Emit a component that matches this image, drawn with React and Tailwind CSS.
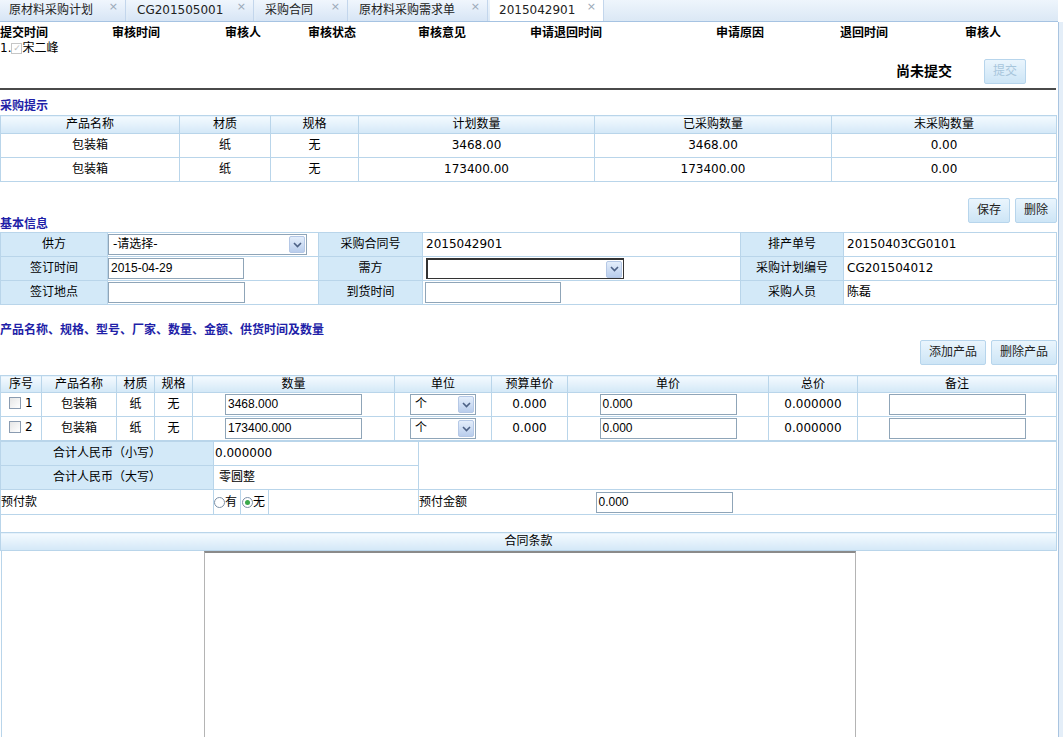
import React from "react";

const tabs = [
  { title: "原材料采购计划", w: "w-[126px]", active: false },
  { title: "CG201505001", w: "w-[126px]", active: false },
  { title: "采购合同", w: "w-[92px]", active: false },
  { title: "原材料采购需求单", w: "w-[138px]", active: false },
  { title: "2015042901", w: "w-[114px]", active: true },
];

const auditCols = ["提交时间", "审核时间", "审核人", "审核状态", "审核意见", "申请退回时间", "申请原因", "退回时间", "审核人"];

const hintRows = [
  { name: "包装箱", mat: "纸", spec: "无", plan: "3468.00", done: "3468.00", left: "0.00" },
  { name: "包装箱", mat: "纸", spec: "无", plan: "173400.00", done: "173400.00", left: "0.00" },
];

const products = [
  { no: 1, name: "包装箱", mat: "纸", spec: "无", qty: "3468.000" },
  { no: 2, name: "包装箱", mat: "纸", spec: "无", qty: "173400.000" },
];

const cell = "border border-[#b9d5ea]";
const head = "border border-[#b9d5ea] bg-linear-to-b from-[#f4faff] to-[#d3e8f7] font-normal text-center";
const label = "border border-[#b9d5ea] bg-[#d3e9f8] text-center";
const inputFont = "font-['Liberation_Sans','Noto_Sans_CJK_SC',sans-serif]";

function Btn({ children, disabled }) {
  return (
    <button
      className={
        "h-[25px] px-[8px] border border-[#b7d5ec] rounded-[2px] bg-linear-to-b from-[#eaf5fd] to-[#cde5f6] text-[12px] " +
        (disabled ? "text-[#a8c6dc]" : "text-[#222]")
      }
    >
      {children}
    </button>
  );
}

function TextBox({ value, w }) {
  return (
    <div className={"h-[21px] border border-[#8fa5b8] bg-white px-[2px] flex items-center text-[12px] " + inputFont + " " + w}>
      {value}
    </div>
  );
}

function Select({ value, w, dark }) {
  return (
    <div
      className={
        "h-[21px] border bg-white flex items-center justify-between pl-[4px] pr-[1px] text-[12px] " +
        (dark ? "border-[#333] border-t-2 border-l-2 " : "border-[#8fa5b8] ") +
        w
      }
    >
      <span>{value}</span>
      <span className="w-[16px] h-[17px] flex items-center justify-center bg-linear-to-b from-[#e4eefb] to-[#b9cdec] border border-[#b5c8e6] rounded-[2px]">
        <svg width="9" height="6" viewBox="0 0 9 6">
          <path d="M1 1 L4.5 4.5 L8 1" fill="none" stroke="#4d6185" strokeWidth="1.6" />
        </svg>
      </span>
    </div>
  );
}

function Radio({ checked }) {
  return (
    <span className="flex w-[11px] h-[11px] shrink-0 rounded-full border border-[#7b8fa6] bg-white items-center justify-center">
      {checked && <span className="w-[5px] h-[5px] rounded-full bg-[#3aa94a]" />}
    </span>
  );
}

function Check() {
  return <span className="inline-block w-[12px] h-[12px] border border-[#8a9bb0] bg-linear-to-br from-[#e6e6e6] to-white align-middle" />;
}

export default function App() {
  return (
    <div className="w-[1063px] h-[737px] overflow-hidden bg-white flex text-[12px] leading-[15px] text-black font-['DejaVu_Sans','Noto_Sans_CJK_SC',sans-serif]">
      <div className="w-[1058px] flex flex-col">
        {/* 标签栏 */}
        <div className="h-[22px] shrink-0 flex bg-linear-to-b from-[#eef5fc] to-[#dbe8f5] border-b border-[#a6c3e2]">
          {tabs.map((t) => (
            <div
              key={t.title}
              className={
                "relative h-[21px] mr-[2px] flex items-center pl-[9px] text-[12px] text-[#222] border-r border-[#c3d6ec] " +
                t.w +
                (t.active ? " bg-white" : " bg-linear-to-b from-[#f0f6fd] to-[#d7e5f5]")
              }
            >
              {t.title}
              <span className="absolute right-[7px] top-[-1px] text-[11px] text-[#9aa8b8]">×</span>
            </div>
          ))}
        </div>

        {/* 审核记录 */}
        <div className="grid grid-cols-[112px_113px_83px_110px_112px_186px_124px_125px_1fr] h-[19px] shrink-0 items-end font-bold">
          {auditCols.map((c, i) => (
            <div key={i}>{c}</div>
          ))}
        </div>
        <div className="h-[15px] shrink-0 flex items-center">
          1.
          <span className="inline-block w-[11px] h-[11px] border border-[#c6c6c6] text-[9px] leading-[9px] text-[#bbb] text-center">✓</span>
          宋二峰
        </div>
        <div className="h-[31px] shrink-0 flex items-center justify-end pr-[32px]">
          <span className="text-[14px] font-bold mr-[32px]">尚未提交</span>
          <Btn disabled>提交</Btn>
        </div>
        <div className="h-[2px] shrink-0 mt-[1px] bg-[#4a4a4a] mr-[2px]" />

        {/* 采购提示 */}
        <div className="h-[24px] shrink-0 flex items-end text-[#1f1fa8] font-bold">采购提示</div>
        <table className="w-[1057px] mt-[1px] table-fixed border-collapse text-center">
          <colgroup>
            <col className="w-[179px]" />
            <col className="w-[91px]" />
            <col className="w-[88px]" />
            <col className="w-[236px]" />
            <col className="w-[237px]" />
            <col />
          </colgroup>
          <thead>
            <tr className="h-[18px]">
              {["产品名称", "材质", "规格", "计划数量", "已采购数量", "未采购数量"].map((h) => (
                <th key={h} className={head}>{h}</th>
              ))}
            </tr>
          </thead>
          <tbody>
            {hintRows.map((r, i) => (
              <tr key={i} className="h-[24px]">
                <td className={cell}>{r.name}</td>
                <td className={cell}>{r.mat}</td>
                <td className={cell}>{r.spec}</td>
                <td className={cell}>{r.plan}</td>
                <td className={cell}>{r.done}</td>
                <td className={cell}>{r.left}</td>
              </tr>
            ))}
          </tbody>
        </table>

        {/* 基本信息 */}
        <div className="h-[25px] shrink-0 mt-[16px] flex justify-end gap-[5px] pr-[1px]">
          <Btn>保存</Btn>
          <Btn>删除</Btn>
        </div>
        <div className="h-[9px] shrink-0 flex items-end text-[#1f1fa8] font-bold">基本信息</div>
        <table className="w-[1057px] table-fixed border-collapse">
          <colgroup>
            <col className="w-[107px]" />
            <col className="w-[211px]" />
            <col className="w-[104px]" />
            <col className="w-[318px]" />
            <col className="w-[103px]" />
            <col />
          </colgroup>
          <tbody>
            <tr className="h-[24px]">
              <td className={label}>供方</td>
              <td className={cell}><Select value="-请选择-" w="w-[199px]" /></td>
              <td className={label}>采购合同号</td>
              <td className={cell + " pl-[3px]"}>2015042901</td>
              <td className={label}>排产单号</td>
              <td className={cell + " pl-[3px]"}>20150403CG0101</td>
            </tr>
            <tr className="h-[24px]">
              <td className={label}>签订时间</td>
              <td className={cell}><TextBox value="2015-04-29" w="w-[136px]" /></td>
              <td className={label}>需方</td>
              <td className={cell + " pl-[3px]"}><Select value="" w="w-[198px]" dark /></td>
              <td className={label}>采购计划编号</td>
              <td className={cell + " pl-[3px]"}>CG201504012</td>
            </tr>
            <tr className="h-[24px]">
              <td className={label}>签订地点</td>
              <td className={cell}><TextBox value="" w="w-[137px]" /></td>
              <td className={label}>到货时间</td>
              <td className={cell + " pl-[2px]"}><TextBox value="" w="w-[136px]" /></td>
              <td className={label}>采购人员</td>
              <td className={cell + " pl-[3px]"}>陈磊</td>
            </tr>
          </tbody>
        </table>

        {/* 产品明细 */}
        <div className="h-[33px] shrink-0 flex items-end text-[#1f1fa8] font-bold">产品名称、规格、型号、厂家、数量、金额、供货时间及数量</div>
        <div className="h-[25px] shrink-0 mt-[2px] flex justify-end gap-[5px] pr-[1px]">
          <Btn>添加产品</Btn>
          <Btn>删除产品</Btn>
        </div>
        <table className="w-[1057px] mt-[10px] table-fixed border-collapse text-center">
          <colgroup>
            <col className="w-[41px]" />
            <col className="w-[75px]" />
            <col className="w-[38px]" />
            <col className="w-[38px]" />
            <col className="w-[202px]" />
            <col className="w-[97px]" />
            <col className="w-[76px]" />
            <col className="w-[201px]" />
            <col className="w-[89px]" />
            <col />
          </colgroup>
          <thead>
            <tr className="h-[17px]">
              {["序号", "产品名称", "材质", "规格", "数量", "单位", "预算单价", "单价", "总价", "备注"].map((h) => (
                <th key={h} className={head}>{h}</th>
              ))}
            </tr>
          </thead>
          <tbody>
            {products.map((p) => (
              <tr key={p.no} className="h-[24px]">
                <td className={cell + " text-left pl-[8px]"}>
                  <span className="inline-flex items-center gap-[4px]"><Check />{p.no}</span>
                </td>
                <td className={cell}>{p.name}</td>
                <td className={cell}>{p.mat}</td>
                <td className={cell}>{p.spec}</td>
                <td className={cell}>
                  <div className="flex justify-center"><TextBox value={p.qty} w="w-[137px]" /></div>
                </td>
                <td className={cell}>
                  <div className="flex justify-center"><Select value="个" w="w-[66px]" /></div>
                </td>
                <td className={cell}>0.000</td>
                <td className={cell}>
                  <div className="flex justify-center"><TextBox value="0.000" w="w-[137px]" /></div>
                </td>
                <td className={cell}>0.000000</td>
                <td className={cell}>
                  <div className="flex justify-center"><TextBox value="" w="w-[137px]" /></div>
                </td>
              </tr>
            ))}
          </tbody>
        </table>

        {/* 合计 */}
        <table className="w-[1057px] table-fixed border-collapse">
          <colgroup>
            <col className="w-[213px]" />
            <col className="w-[27px]" />
            <col className="w-[28px]" />
            <col className="w-[150px]" />
            <col className="w-[177px]" />
            <col />
          </colgroup>
          <tbody>
            <tr className="h-[24px]">
              <td className={label}>合计人民币（小写）</td>
              <td colSpan={3} className={cell + " pl-[1px]"}>0.000000</td>
              <td colSpan={2} rowSpan={2} className={cell}></td>
            </tr>
            <tr className="h-[24px]">
              <td className={label}>合计人民币（大写）</td>
              <td colSpan={3} className={cell + " pl-[5px]"}>零圆整</td>
            </tr>
            <tr className="h-[25px]">
              <td className={cell + " border-r-0"}>预付款</td>
              <td className={cell + " align-middle"}>
                <div className="flex items-center">
                  <Radio />
                  <span>有</span>
                </div>
              </td>
              <td className={cell + " align-middle"}>
                <div className="flex items-center pl-[1px]">
                  <Radio checked />
                  <span>无</span>
                </div>
              </td>
              <td className="border-y border-[#b9d5ea]"></td>
              <td className={cell + " border-r-0"}>预付金额</td>
              <td className={cell + " border-l-0"}>
                <TextBox value="0.000" w="w-[137px]" />
              </td>
            </tr>
            <tr className="h-[18px]">
              <td colSpan={6} className={cell}></td>
            </tr>
            <tr className="h-[18px]">
              <th colSpan={6} className={head}>合同条款</th>
            </tr>
          </tbody>
        </table>

        {/* 合同条款编辑区 */}
        <div className="flex-1 flex border-l border-[#b9d5ea] ml-[1px]">
          <div className="w-[202px]" />
          <div className="w-[652px] border-x border-[#b4b4b4] border-t-2 border-t-[#8a8a8a] bg-white" />
        </div>
      </div>
      <div className="w-[5px] mt-[22px] border-l border-[#a9c4e0] bg-[#e4eef8]" />
    </div>
  );
}
